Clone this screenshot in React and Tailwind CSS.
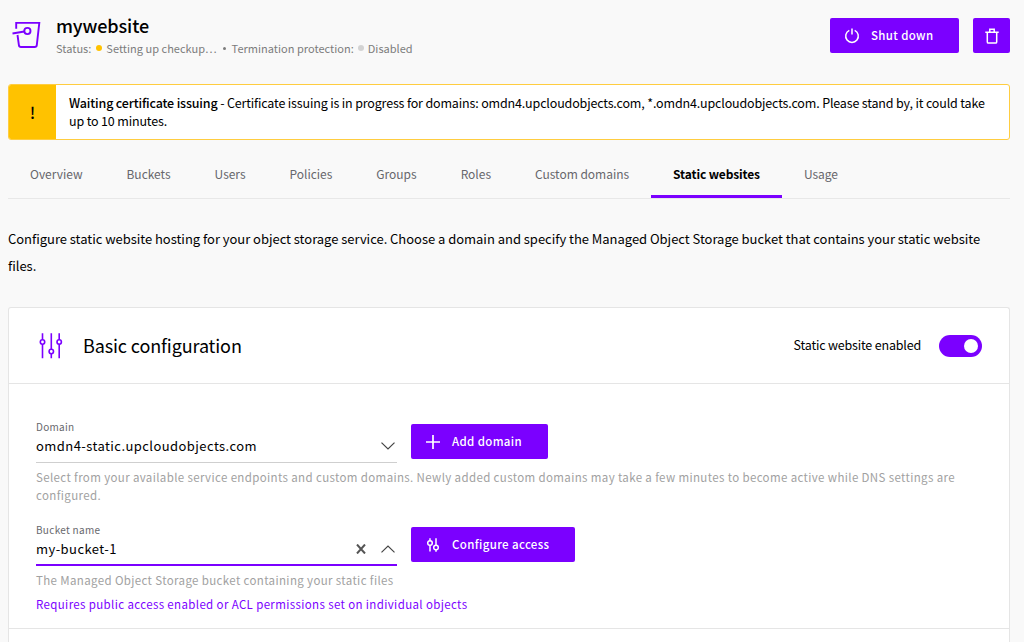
import React from "react";

const tabs = ["Overview", "Buckets", "Users", "Policies", "Groups", "Roles", "Custom domains", "Static websites", "Usage"];

function BucketIcon() {
  return (
    <svg className="h-[30px] w-[30px] shrink-0" viewBox="0 0 30 30" fill="none" stroke="#7b00ff" strokeWidth="1.9">
      <path d="M4.200 8.800V2.900h23.100l-2.500 22.200q-.2 1.900-2.100 1.900H9q-1.900 0-2.100-1.900L5.500 15" />
      <circle cx="15.400" cy="11" r="3.100" />
      <path d="M.5 13.500l11.800-2" />
    </svg>
  );
}

function PowerIcon() {
  return (
    <svg className="h-4 w-4 shrink-0" viewBox="0 0 16 16" fill="none" stroke="#fff" strokeWidth="1.500">
      <path d="M5.300 2.400a6.300 6.300 0 1 0 5.400 0M8 .5v6" />
    </svg>
  );
}

function TrashIcon() {
  return (
    <svg className="h-4 w-4" viewBox="0 0 16 16" fill="none" stroke="#fff" strokeWidth="1.500">
      <path d="M1.300 4.200h13.400M3.300 4.200v9.700q0 1.100 1.100 1.100h7.200q1.100 0 1.100-1.100V4.200M5.800 4.200V1.200h4.400v3" />
    </svg>
  );
}

function SlidersIcon() {
  return (
    <svg className="h-[26px] w-6 shrink-0" viewBox="0 0 24 26" fill="none" stroke="#7b00ff" strokeWidth="1.600">
      <path d="M3.500.3v6.500M3.500 11.200v14M12.300.3v16M12.300 20.800v4.400M20.200.3v6.500M20.200 11.200v14" />
      <circle cx="3.500" cy="9" r="2.200" />
      <circle cx="12.300" cy="18.500" r="2.200" />
      <circle cx="20.200" cy="9" r="2.200" />
    </svg>
  );
}

function AccessIcon() {
  return (
    <svg className="h-4 w-4 shrink-0" viewBox="0 0 16 16" fill="none" stroke="#fff" strokeWidth="1.500">
      <path d="M5 1.200v2.500M5 8.300v6.200M11 1.200v7M11 12.800v2" />
      <circle cx="5" cy="6" r="2.300" />
      <circle cx="11" cy="10.500" r="2.300" />
    </svg>
  );
}

function PlusIcon() {
  return (
    <svg className="h-4 w-4 shrink-0" viewBox="0 0 16 16" fill="none" stroke="#fff" strokeWidth="1.700">
      <path d="M8 1v14M1 8h14" />
    </svg>
  );
}

function Chevron({ up }) {
  return (
    <svg className="h-2 w-[14px] shrink-0" viewBox="0 0 14 8" fill="none" stroke="#444" strokeWidth="1.200">
      <path d={up ? "M.5 7.400L7 1l6.500 6.400" : "M.5.600L7 7 13.500.600"} />
    </svg>
  );
}

export default function App() {
  return (
    <div className="flex h-[642px] w-[1024px] flex-col overflow-hidden bg-[#f9f9f9] pl-2 pr-[14px] font-['Noto_Sans_CJK_SC',sans-serif] text-[13px] text-black">
      <header className="flex h-[84px] shrink-0 items-start">
        <div className="pl-[4px] pt-[20px]">
          <BucketIcon />
        </div>
        <div className="grow pl-[14px] pt-3">
          <h1 className="text-[18px] font-medium leading-[26px] tracking-[-0.1px]">mywebsite</h1>
          <p className="mt-px flex items-center whitespace-nowrap text-[11px] leading-[18px] tracking-[0.02px] text-[#7c7c7c]">
            Status:
            <span className="ml-[5px] mr-1 h-[6px] w-[6px] rounded-full bg-[#ffc200]" />
            Setting up checkup…
            <span className="mx-[6px] h-[3px] w-[3px] rounded-full bg-[#7c7c7c]" />
            Termination protection:
            <span className="mx-1 h-[6px] w-[6px] rounded-full bg-[#d3d3d3]" />
            Disabled
          </p>
        </div>
        <div className="flex gap-[14px] pt-[18px]">
          <button className="flex h-[35px] w-[129px] items-center rounded-[2px] bg-[#7b00ff] pl-[14px] text-[11.500px] font-medium tracking-[0.35px] text-white">
            <PowerIcon />
            <span className="ml-[11px]">Shut down</span>
          </button>
          <button aria-label="Delete" className="flex h-[35px] w-[37px] items-center justify-center rounded-[2px] bg-[#7b00ff]">
            <TrashIcon />
          </button>
        </div>
      </header>

      <section className="flex h-14 shrink-0 overflow-hidden rounded-[3px] border border-[#ffcd40] bg-white">
        <div className="flex w-[47px] shrink-0 items-center justify-center bg-[#ffc200] text-[16px] font-medium">!</div>
        <p className="whitespace-nowrap pl-[13px] pt-[9px] text-[12.500px] leading-[18px] tracking-[-0.16px]">
          <b className="font-medium">Waiting certificate issuing</b> - Certificate issuing is in progress for domains: omdn4.upcloudobjects.com, *.omdn4.upcloudobjects.com. Please stand by, it could take
          <br />
          up to 10 minutes.
        </p>
      </section>

      <nav className="mt-[10px] flex h-[49px] shrink-0 border-b border-[#e8e8e8] text-[12px] tracking-[-0.02px] text-[#67676c]">
        {tabs.map((t) => (
          <a
            key={t}
            className={
              t === "Static websites"
                ? "flex items-center whitespace-nowrap border-b-[3px] border-[#7b00ff] px-[22px] pt-[2px] font-bold tracking-[-0.13px] text-black"
                : "flex items-center whitespace-nowrap px-[22px] pb-px"
            }
          >
            {t}
          </a>
        ))}
      </nav>

      <p className="mt-[26px] h-[82px] shrink-0 whitespace-nowrap leading-[27px] tracking-[-0.03px]">
        Configure static website hosting for your object storage service. Choose a domain and specify the Managed Object Storage bucket that contains your static website
        <br />
        files.
      </p>

      <main className="flex grow flex-col rounded-t-[3px] border border-b-0 border-[#e5e5e5] bg-white">
        <div className="flex h-[76px] shrink-0 items-center border-b border-[#e5e5e5] pl-[30px] pr-[27px]">
          <SlidersIcon />
          <h2 className="ml-5 grow pb-[2px] text-[18px] leading-6 tracking-[-0.12px]">Basic configuration</h2>
          <span className="text-[12.500px] tracking-[-0.18px]">Static website enabled</span>
          <span className="ml-[18px] flex h-[22px] w-[43px] items-center justify-end rounded-full bg-[#7b00ff] pr-1">
            <span className="h-[14px] w-[14px] rounded-full bg-white" />
          </span>
        </div>

        <div className="flex h-[245px] shrink-0 flex-col border-b border-[#e5e5e5] pl-[27px] pt-[34px]">
          <div className="flex h-[45px]">
            <div className="flex w-[361px] flex-col border-b border-[#cfcfcf] pt-px">
              <label className="text-[10px] leading-4 tracking-[0.3px] text-[#67676c]">Domain</label>
              <div className="flex items-center justify-between pr-[2px]">
                <span className="text-[13px] leading-[22px] tracking-[0.43px]">omdn4-static.upcloudobjects.com</span>
                <Chevron />
              </div>
            </div>
            <button className="ml-[14px] mt-[6px] flex h-[35px] w-[137px] items-center rounded-[2px] bg-[#7b00ff] pl-[14px] text-[11.500px] font-medium tracking-[0.35px] text-white">
              <PlusIcon />
              <span className="ml-[11px]">Add domain</span>
            </button>
          </div>
          <p className="mt-[5px] whitespace-nowrap text-[11.500px] leading-[18px] tracking-[0.365px] text-[#a1a1a1]">
            Select from your available service endpoints and custom domains. Newly added custom domains may take a few minutes to become active while DNS settings are
            <br />
            configured.
          </p>

          <div className="mt-[17px] flex h-[45px]">
            <div className="flex w-[361px] flex-col border-b-2 border-[#7b00ff] pt-px">
              <label className="text-[10px] leading-4 tracking-[0.3px] text-[#67676c]">Bucket name</label>
              <div className="flex items-center pr-[2px]">
                <span className="grow text-[13px] leading-[22px] tracking-[0.43px]">my-bucket-1</span>
                <svg className="mr-[15px] h-[10px] w-[10px]" viewBox="0 0 10 10" stroke="#555" strokeWidth="2">
                  <path d="M1 .5l8 9M9 .5l-8 9" />
                </svg>
                <Chevron up />
              </div>
            </div>
            <button className="ml-[14px] mt-[6px] flex h-[35px] w-[164px] items-center rounded-[2px] bg-[#7b00ff] pl-[14px] text-[11.500px] font-medium tracking-[0.35px] text-white">
              <AccessIcon />
              <span className="ml-[11px]">Configure access</span>
            </button>
          </div>
          <p className="mt-[5px] text-[11.500px] leading-[18px] tracking-[0.365px] text-[#a1a1a1]">The Managed Object Storage bucket containing your static files</p>
          <p className="mt-[6px] text-[11.500px] leading-[18px] tracking-[0.365px] text-[#7b00ff]">Requires public access enabled or ACL permissions set on individual objects</p>
        </div>
      </main>
    </div>
  );
}
